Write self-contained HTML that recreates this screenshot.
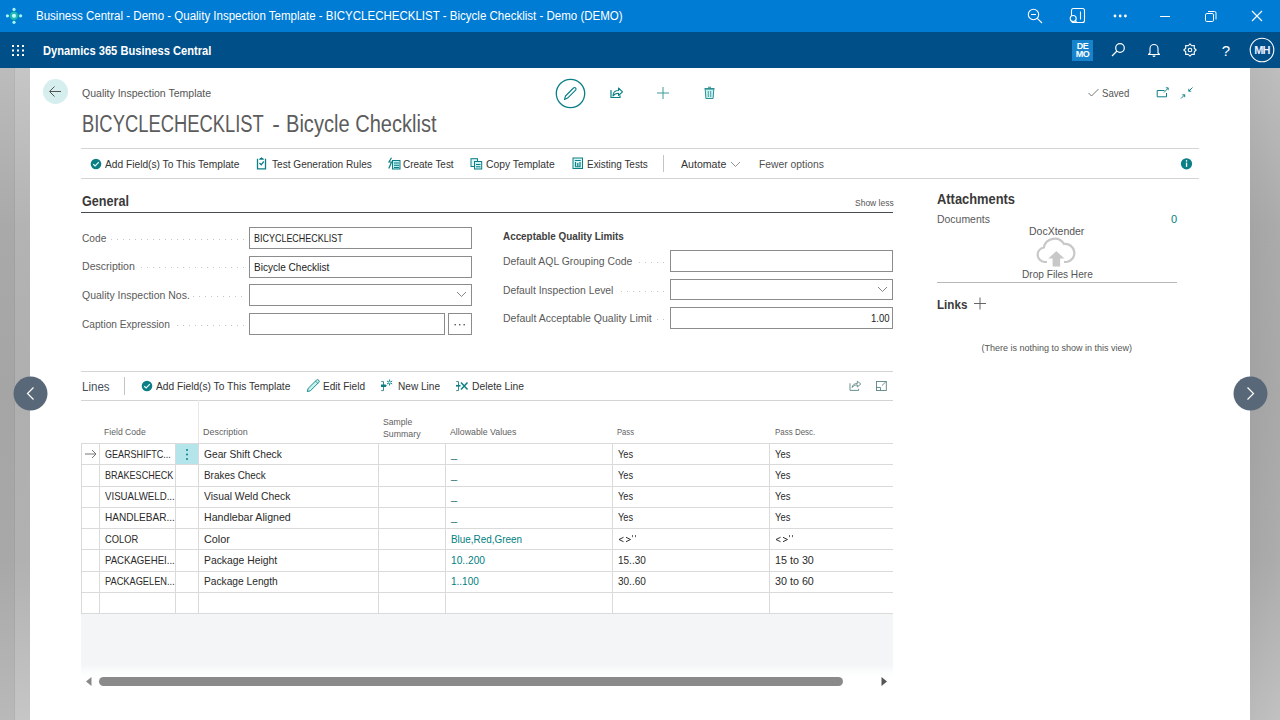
<!DOCTYPE html>
<html><head><meta charset="utf-8"><style>*{margin:0;padding:0;box-sizing:border-box}
html,body{width:1280px;height:720px;overflow:hidden;background:#fff;font-family:"Liberation Sans",sans-serif}
.t{position:absolute;white-space:nowrap;transform-origin:0 0}
.b{position:absolute}
svg.b{overflow:visible}</style></head><body>
<svg class="b" style="left:612px;top:530px" width="30" height="16"><path d="M11.5 7.3L7 9.5L11.5 11.7M14 7.3L18.5 9.5L14 11.7" fill="none" stroke="#333" stroke-width="1"/><path d="M20.5 5V7.2M23.5 5V7.2" stroke="#666" stroke-width="1"/></svg>
<svg class="b" style="left:769px;top:530px" width="30" height="16"><path d="M11.5 7.3L7 9.5L11.5 11.7M14 7.3L18.5 9.5L14 11.7" fill="none" stroke="#333" stroke-width="1"/><path d="M20.5 5V7.2M23.5 5V7.2" stroke="#666" stroke-width="1"/></svg>
<div class="b" style="left:0px;top:0px;width:1280px;height:32px;background:#007cd4;"></div>
<div class="b" style="left:0px;top:32px;width:1280px;height:36px;background:#004f89;"></div>
<div class="b" style="left:0px;top:68px;width:15px;height:652px;background:linear-gradient(180deg,#bcbcbc 0%,#a9a9a9 24.5%,#a5a5a5 49%,#a8a8a8 75.5%,#b9b9b9 100%);"></div>
<div class="b" style="left:15px;top:68px;width:15px;height:652px;background:linear-gradient(180deg,#c6c6c6 0%,#b3b3b3 24.5%,#afafaf 49%,#b1b1b1 75.5%,#c6c6c6 100%);"></div>
<div class="b" style="left:14px;top:68px;width:1px;height:652px;background:rgba(0,0,0,0.035);"></div>
<div class="b" style="left:1250px;top:68px;width:30px;height:652px;background:linear-gradient(90deg,rgba(0,0,0,0.025),rgba(255,255,255,0.035)),linear-gradient(180deg,#bcbcbc 0%,#a8a8a8 24.5%,#a6a6a6 49%,#aaaaaa 75.5%,#bfbfbf 100%);"></div>
<svg class="b" style="left:0px;top:0px;" width="32" height="32" viewBox="0 0 32 32"><path d="M14 10L20 15.8L14 21.8L8 15.8Z" fill="#0c8f96"/><circle cx="14" cy="15.8" r="4" fill="#1ab8b8"/><circle cx="14" cy="15.8" r="2" fill="#c8fbff"/><g fill="#a8f6ff"><circle cx="14" cy="9.4" r="1.6"/><circle cx="14" cy="22.3" r="1.6"/><circle cx="7.4" cy="15.8" r="1.6"/><circle cx="20.6" cy="15.8" r="1.6"/></g></svg>
<svg class="b" style="left:1026px;top:7px;" width="18" height="18" viewBox="0 0 18 18"><circle cx="7.5" cy="7.5" r="5.2" fill="none" stroke="#fff" stroke-width="1.1"/><path d="M5 7.5H10M11.3 11.3L16 16" stroke="#fff" stroke-width="1.1"/></svg>
<svg class="b" style="left:1068px;top:7px;" width="20" height="18" viewBox="0 0 20 18"><rect x="3.5" y="1.5" width="13" height="14" rx="2" fill="none" stroke="#fff" stroke-width="1.1"/><path d="M12.5 4.5V12.5" stroke="#fff" stroke-width="1.1"/><circle cx="5.2" cy="11.5" r="3" fill="#007cd4" stroke="#fff" stroke-width="1.1"/><path d="M7.3 13.6L9 15.6" stroke="#fff" stroke-width="1.1"/></svg>
<svg class="b" style="left:1112px;top:13px;" width="16" height="6" viewBox="0 0 16 6"><circle cx="3" cy="3" r="1.4" fill="#fff"/><circle cx="8.2" cy="3" r="1.4" fill="#fff"/><circle cx="13.4" cy="3" r="1.4" fill="#fff"/></svg>
<div class="b" style="left:1160px;top:16px;width:10px;height:1px;background:#fff;"></div>
<svg class="b" style="left:1204px;top:10px;" width="14" height="14" viewBox="0 0 14 14"><rect x="1.5" y="3.5" width="8" height="8" rx="1.3" fill="none" stroke="#fff" stroke-width="1"/><path d="M4 1.5H10.5A1.5 1.5 0 0 1 12 3V9.5" fill="none" stroke="#fff" stroke-width="1"/></svg>
<svg class="b" style="left:1251px;top:10px;" width="12" height="12" viewBox="0 0 12 12"><path d="M1 1L11 11M11 1L1 11" stroke="#fff" stroke-width="1.1"/></svg>
<svg class="b" style="left:11px;top:44px;" width="14" height="13" viewBox="0 0 14 13"><rect x="1" y="1.0" width="2" height="2" fill="#fff"/><rect x="1" y="5.5" width="2" height="2" fill="#fff"/><rect x="1" y="10.0" width="2" height="2" fill="#fff"/><rect x="6" y="1.0" width="2" height="2" fill="#fff"/><rect x="6" y="5.5" width="2" height="2" fill="#fff"/><rect x="6" y="10.0" width="2" height="2" fill="#fff"/><rect x="11" y="1.0" width="2" height="2" fill="#fff"/><rect x="11" y="5.5" width="2" height="2" fill="#fff"/><rect x="11" y="10.0" width="2" height="2" fill="#fff"/></svg>
<div class="b" style="left:1072px;top:40px;width:21px;height:21px;background:#1683cc;"></div>
<div class="t" style="left:1072px;top:41.5px;width:21px;text-align:center;font-size:9px;line-height:8.5px;font-weight:bold;color:#fff;letter-spacing:-0.4px">DE<br>MO</div>
<svg class="b" style="left:1110px;top:42px;" width="16" height="16" viewBox="0 0 16 16"><circle cx="10" cy="6" r="4.3" fill="none" stroke="#fff" stroke-width="1.2"/><path d="M7 9L2 14" stroke="#fff" stroke-width="1.2"/></svg>
<svg class="b" style="left:1147px;top:42px;" width="14" height="15" viewBox="0 0 14 15"><path d="M3 11V6.5A4 4 0 0 1 11 6.5V11L12.5 12.5H1.5Z" fill="none" stroke="#fff" stroke-width="1.1" stroke-linejoin="round"/><path d="M5.5 13.5A1.5 1.5 0 0 0 8.5 13.5" fill="#fff"/></svg>
<svg class="b" style="left:1183px;top:43px;" width="14" height="14" viewBox="0 0 14 14"><path d="M13.20 7.00 L11.25 8.76 L11.38 11.38 L8.76 11.25 L7.00 13.20 L5.24 11.25 L2.62 11.38 L2.75 8.76 L0.80 7.00 L2.75 5.24 L2.62 2.62 L5.24 2.75 L7.00 0.80 L8.76 2.75 L11.38 2.62 L11.25 5.24Z" fill="none" stroke="#fff" stroke-width="1.1" stroke-linejoin="round"/><circle cx="7" cy="7" r="1.8" fill="none" stroke="#fff" stroke-width="1.1"/></svg>
<div class="t" style="left:1219px;top:43px;width:14px;text-align:center;font-size:15px;line-height:15px;color:#fff">?</div>
<svg class="b" style="left:1249px;top:37px;" width="26" height="26" viewBox="0 0 26 26"><circle cx="13" cy="13" r="11.8" fill="none" stroke="#fff" stroke-width="1.1"/></svg>
<div class="t" style="left:1249px;top:45px;width:26px;text-align:center;font-size:11px;line-height:11px;font-weight:bold;color:#eef;letter-spacing:-0.8px">MH</div>
<svg class="b" style="left:42px;top:78px;" width="27" height="27" viewBox="0 0 27 27"><circle cx="13.5" cy="13.5" r="12.5" fill="#d6eeee"/><path d="M8 13.5H19M12.5 8.5L7.5 13.5L12.5 18.5" fill="none" stroke="#555" stroke-width="1"/></svg>
<svg class="b" style="left:555px;top:78px;" width="31" height="31" viewBox="0 0 31 31"><circle cx="15.5" cy="15.5" r="14.2" fill="none" stroke="#0b7f85" stroke-width="1.3"/><path d="M9.5 21.5L10.5 18L18.5 10A1.4 1.4 0 0 1 20.6 12.1L12.6 20.1Z" fill="none" stroke="#0b7f85" stroke-width="1.1" stroke-linejoin="round"/></svg>
<svg class="b" style="left:609px;top:86px;" width="15" height="14" viewBox="0 0 15 14"><path d="M2 4V11.5H11V9.5" fill="none" stroke="#0b7f85" stroke-width="1.2"/><path d="M4 10C4 6 6.5 4.5 9.5 4.5V2L13.5 5.8L9.5 9.5V7.2C7 7.2 5.2 8 4 10Z" fill="none" stroke="#0b7f85" stroke-width="1.1" stroke-linejoin="round"/></svg>
<svg class="b" style="left:656px;top:86px;" width="14" height="14" viewBox="0 0 14 14"><path d="M7 1V13M1 7H13" stroke="#3c9a9c" stroke-width="1"/></svg>
<svg class="b" style="left:703px;top:86px;" width="13" height="14" viewBox="0 0 13 14"><path d="M2.2 3H10.8L10.1 12.5H2.9Z" fill="#c8f2f2" stroke="#2f8f93" stroke-width="1" stroke-linejoin="round"/><path d="M1.5 2.6H11.5M5 1.3H8" stroke="#2f8f93" stroke-width="1.1"/><path d="M5.3 5V11M7.7 5V11" stroke="#4a9fa2" stroke-width="1"/></svg>
<svg class="b" style="left:1087px;top:87px;" width="13" height="11" viewBox="0 0 13 11"><path d="M1.5 6L4.5 9L11.5 2" fill="none" stroke="#666" stroke-width="0.9"/></svg>
<svg class="b" style="left:1155px;top:86px;" width="15" height="13" viewBox="0 0 15 13"><path d="M9.5 4.5H2.2V10.8H11.5V7" fill="none" stroke="#0b7f85" stroke-width="1"/><path d="M9 6.5L13 2.2M10.8 1.8H13.2V4.2" fill="none" stroke="#0b7f85" stroke-width="0.9"/></svg>
<svg class="b" style="left:1179px;top:86px;" width="16" height="14" viewBox="0 0 16 14"><path d="M13.5 1.5L9.8 5.2M9.8 2.8V5.2H12.2M2 12.5L5.7 8.8M3.3 8.8H5.7V11.2" fill="none" stroke="#0b7f85" stroke-width="0.95"/></svg>
<div class="b" style="left:81px;top:148px;width:1118px;height:1px;background:#d4d4d4;"></div>
<div class="b" style="left:81px;top:178px;width:1118px;height:1px;background:#d4d4d4;"></div>
<div class="b" style="left:663px;top:155px;width:1px;height:17px;background:#c4c4c4;"></div>
<svg class="b" style="left:90px;top:158px;" width="12" height="12" viewBox="0 0 12 12"><circle cx="6" cy="6" r="5.3" fill="#0b7f85"/><path d="M3.2 6.2L5.2 8L8.8 4.2" fill="none" stroke="#e8ffff" stroke-width="1.2"/></svg>
<svg class="b" style="left:256px;top:157px;" width="11" height="13" viewBox="0 0 11 13"><path d="M1.5 1.8V11.8H9.5V1.8" fill="none" stroke="#0b7f85" stroke-width="1.3"/><path d="M3.5 2.2L5.5 0.8L7.5 2.2Z" fill="#0b7f85" stroke="#0b7f85" stroke-width="1"/><path d="M3.5 6L5.2 7.8L7.8 4.5" fill="none" stroke="#0b7f85" stroke-width="1.3"/></svg>
<svg class="b" style="left:388px;top:157px;" width="13" height="13" viewBox="0 0 13 13"><rect x="4.5" y="3.5" width="7.5" height="8.5" fill="#bfeeee" stroke="#0b7f85" stroke-width="1"/><path d="M6 6H11M6 8.3H11M6 10.5H11" stroke="#0b7f85" stroke-width="1"/><path d="M3.5 0.8L1 5H3.5L0.8 11.5" fill="none" stroke="#0b7f85" stroke-width="1.2"/></svg>
<svg class="b" style="left:470px;top:158px;" width="13" height="12" viewBox="0 0 13 12"><rect x="1" y="0.7" width="6.5" height="7.8" fill="#e0f7f7" stroke="#0b7f85" stroke-width="1"/><rect x="4.5" y="3.5" width="7.2" height="7.5" fill="#d0f2f2" stroke="#0b7f85" stroke-width="1"/><path d="M6 6.5H10.5M6 8.8H10.5" stroke="#0b7f85" stroke-width="1"/></svg>
<svg class="b" style="left:572px;top:157px;" width="12" height="13" viewBox="0 0 12 13"><rect x="1" y="1" width="9.5" height="10.5" fill="#d8f6f6" stroke="#0b7f85" stroke-width="1"/><path d="M2.8 3.5H8.8M3 9.8H8.6" stroke="#0b7f85" stroke-width="1.1"/><path d="M3.5 5V9.5M5.8 6V9.5M8 5V9.5" stroke="#0b7f85" stroke-width="1.2"/></svg>
<svg class="b" style="left:730px;top:161px;" width="11" height="7" viewBox="0 0 11 7"><path d="M1 1L5.5 5.5L10 1" fill="none" stroke="#888" stroke-width="0.9"/></svg>
<svg class="b" style="left:1180px;top:157px;" width="13" height="13" viewBox="0 0 13 13"><circle cx="6.5" cy="6.8" r="5.6" fill="#0b7f85"/><rect x="5.9" y="5.6" width="1.3" height="4.2" fill="#fff"/><circle cx="6.55" cy="3.9" r="0.8" fill="#fff"/></svg>
<div class="b" style="left:81px;top:212px;width:812px;height:1px;background:#474b52;"></div>
<div class="b" style="left:111px;top:239px;width:134px;height:1px;background:repeating-linear-gradient(90deg,#c6c6c6 0 1px,transparent 1px 6px)"></div>
<div class="b" style="left:141px;top:267px;width:104px;height:1px;background:repeating-linear-gradient(90deg,#c6c6c6 0 1px,transparent 1px 6px)"></div>
<div class="b" style="left:193px;top:296px;width:52px;height:1px;background:repeating-linear-gradient(90deg,#c6c6c6 0 1px,transparent 1px 6px)"></div>
<div class="b" style="left:177px;top:325px;width:68px;height:1px;background:repeating-linear-gradient(90deg,#c6c6c6 0 1px,transparent 1px 6px)"></div>
<div class="b" style="left:639px;top:262px;width:28px;height:1px;background:repeating-linear-gradient(90deg,#c6c6c6 0 1px,transparent 1px 6px)"></div>
<div class="b" style="left:621px;top:291px;width:46px;height:1px;background:repeating-linear-gradient(90deg,#c6c6c6 0 1px,transparent 1px 6px)"></div>
<div class="b" style="left:657px;top:319px;width:10px;height:1px;background:repeating-linear-gradient(90deg,#c6c6c6 0 1px,transparent 1px 6px)"></div>
<div class="b" style="left:249px;top:227px;width:223px;height:22px;border:1px solid #8c8c8c;background:#fff"></div>
<div class="b" style="left:249px;top:256px;width:223px;height:22px;border:1px solid #8c8c8c;background:#fff"></div>
<div class="b" style="left:249px;top:284px;width:223px;height:22px;border:1px solid #8c8c8c;background:#fff"></div>
<div class="b" style="left:249px;top:313px;width:196px;height:22px;border:1px solid #8c8c8c;background:#fff"></div>
<div class="b" style="left:448px;top:313px;width:24px;height:22px;border:1px solid #8c8c8c;background:#fff"></div>
<div class="b" style="left:670px;top:250px;width:223px;height:22px;border:1px solid #8c8c8c;background:#fff"></div>
<div class="b" style="left:670px;top:279px;width:223px;height:21px;border:1px solid #8c8c8c;background:#fff"></div>
<div class="b" style="left:670px;top:307px;width:223px;height:22px;border:1px solid #8c8c8c;background:#fff"></div>
<svg class="b" style="left:456px;top:291px;" width="11" height="7" viewBox="0 0 11 7"><path d="M1 1L5.5 5.5L10 1" fill="none" stroke="#777" stroke-width="0.9"/></svg>
<svg class="b" style="left:877px;top:286px;" width="11" height="7" viewBox="0 0 11 7"><path d="M1 1L5.5 5.5L10 1" fill="none" stroke="#777" stroke-width="0.9"/></svg>
<svg class="b" style="left:453px;top:323px;" width="14" height="4" viewBox="0 0 14 4"><rect x="1.5" y="1" width="1.4" height="1.4" fill="#555"/><rect x="6" y="1" width="1.4" height="1.4" fill="#555"/><rect x="10.5" y="1" width="1.4" height="1.4" fill="#555"/></svg>
<svg class="b" style="left:1035px;top:235px;" width="42" height="33" viewBox="0 0 42 33"><path d="M12 27H9.5A7.3 7.3 0 0 1 8.8 12.5A11 11 0 0 1 29 9A8.5 8.5 0 0 1 31.5 27H29" fill="none" stroke="#c8c8c8" stroke-width="2.2"/><path d="M21.3 16L13.3 23.5H17.6V31.5H25.1V23.5H29.3Z" fill="#c8c8c8"/></svg>
<div class="b" style="left:937px;top:282px;width:240px;height:1px;background:#b8b8b8;"></div>
<svg class="b" style="left:973px;top:297px;" width="14" height="14" viewBox="0 0 14 14"><path d="M7 0.5V12.5M1 6.5H13" stroke="#555" stroke-width="0.9"/></svg>
<div class="b" style="left:81px;top:371px;width:812px;height:1px;background:#d4d4d4;"></div>
<div class="b" style="left:81px;top:400px;width:812px;height:1px;background:#d4d4d4;"></div>
<div class="b" style="left:124px;top:377px;width:1px;height:18px;background:#c4c4c4;"></div>
<svg class="b" style="left:141px;top:380px;" width="12" height="12" viewBox="0 0 12 12"><circle cx="6" cy="6" r="5.3" fill="#0b7f85"/><path d="M3.2 6.2L5.2 8L8.8 4.2" fill="none" stroke="#e8ffff" stroke-width="1.2"/></svg>
<svg class="b" style="left:300px;top:376px;" width="24" height="20" viewBox="0 0 24 20"><path d="M7.3 15.6L8.1 12.4L16.4 4.2A1.6 1.6 0 0 1 18.7 6.5L10.4 14.8Z" fill="#c6f2ec" stroke="#0b7f85" stroke-width="0.9" stroke-linejoin="round"/><path d="M15.5 5.1L17.8 7.4" stroke="#0b7f85" stroke-width="0.8"/></svg>
<svg class="b" style="left:376px;top:376px;" width="24" height="20" viewBox="0 0 24 20"><path d="M5.2 5.6H7.5V14.6H5.2" fill="none" stroke="#3f8a8a" stroke-width="1"/><path d="M5 8.6H9.6L10.8 9.85L9.6 11.1H5Z" fill="#0b7f85"/><path d="M13.6 3.5V9.5M11 5L16.2 8M11 8L16.2 5" stroke="#0b7f85" stroke-width="1"/><circle cx="13.6" cy="6.5" r="1" fill="#bff"/></svg>
<svg class="b" style="left:451px;top:376px;" width="24" height="20" viewBox="0 0 24 20"><path d="M5.2 5.6H7.5V14.6H5.2" fill="none" stroke="#3f8a8a" stroke-width="1"/><path d="M5 8.9H9.5V10.6H5Z" fill="#0b7f85"/><path d="M10 6.6L16.5 13.4M16.5 6.6L10 13.4" stroke="#0b7f85" stroke-width="1.5"/></svg>
<svg class="b" style="left:844px;top:376px;" width="50" height="20" viewBox="0 0 50 20"><path d="M6 7.3V14.4H14.6V12.8" fill="none" stroke="#5b8585" stroke-width="0.9"/><path d="M8.2 11.5C8.5 8.5 10.5 7.5 13.3 7.5V5.2L16.8 8L13.3 11V8.9C11 8.9 9.3 9.8 8.2 11.5Z" fill="none" stroke="#5b8585" stroke-width="0.9" stroke-linejoin="round"/><rect x="32.5" y="5.5" width="9.8" height="9" fill="none" stroke="#5b8585" stroke-width="0.9"/><path d="M32.5 11.5H36.5V14.5" fill="none" stroke="#5b8585" stroke-width="0.9"/><path d="M38 9.5L41.8 5.8" stroke="#5b8585" stroke-width="0.9"/></svg>
<div class="b" style="left:81px;top:613px;width:812px;height:64px;background:linear-gradient(180deg,#f4f5f6 0%,#f4f5f6 80%,#fbfcfc 92%,#fff 100%);"></div>
<div class="b" style="left:198px;top:400px;width:1px;height:43px;background:#e8e8e8;"></div>
<div class="b" style="left:198px;top:443px;width:1px;height:171px;background:#dadada;"></div>
<div class="b" style="left:81px;top:443px;width:812px;height:1px;background:#dadada;"></div>
<div class="b" style="left:81px;top:464px;width:812px;height:1px;background:#dadada;"></div>
<div class="b" style="left:81px;top:486px;width:812px;height:1px;background:#dadada;"></div>
<div class="b" style="left:81px;top:507px;width:812px;height:1px;background:#dadada;"></div>
<div class="b" style="left:81px;top:528px;width:812px;height:1px;background:#dadada;"></div>
<div class="b" style="left:81px;top:549px;width:812px;height:1px;background:#dadada;"></div>
<div class="b" style="left:81px;top:571px;width:812px;height:1px;background:#dadada;"></div>
<div class="b" style="left:81px;top:592px;width:812px;height:1px;background:#dadada;"></div>
<div class="b" style="left:81px;top:613px;width:812px;height:1px;background:#dadada;"></div>
<div class="b" style="left:81px;top:443px;width:1px;height:171px;background:#dadada;"></div>
<div class="b" style="left:99px;top:443px;width:1px;height:171px;background:#dadada;"></div>
<div class="b" style="left:175px;top:443px;width:1px;height:171px;background:#dadada;"></div>
<div class="b" style="left:378px;top:443px;width:1px;height:171px;background:#dadada;"></div>
<div class="b" style="left:445px;top:443px;width:1px;height:171px;background:#dadada;"></div>
<div class="b" style="left:612px;top:443px;width:1px;height:171px;background:#dadada;"></div>
<div class="b" style="left:769px;top:443px;width:1px;height:171px;background:#dadada;"></div>
<div class="b" style="left:176px;top:444px;width:22px;height:20px;background:#b3e5ea;"></div>
<svg class="b" style="left:84px;top:449px;" width="14" height="10" viewBox="0 0 14 10"><path d="M1 5H12M8 1L12 5L8 9" fill="none" stroke="#666" stroke-width="0.9"/></svg>
<svg class="b" style="left:185px;top:448px;" width="4" height="14" viewBox="0 0 4 14"><circle cx="2" cy="2" r="1" fill="#0b7f85"/><circle cx="2" cy="6.5" r="1" fill="#0b7f85"/><circle cx="2" cy="11" r="1" fill="#0b7f85"/></svg>
<div class="b" style="left:99px;top:677px;width:744px;height:9px;background:#8a8a8a;border-radius:4.5px;"></div>
<svg class="b" style="left:85px;top:677px;" width="8" height="9" viewBox="0 0 8 9"><path d="M6.5 0L1 4.5L6.5 9Z" fill="#888"/></svg>
<svg class="b" style="left:880px;top:677px;" width="8" height="9" viewBox="0 0 8 9"><path d="M1.5 0L7 4.5L1.5 9Z" fill="#555"/></svg>
<svg class="b" style="left:13px;top:376px;" width="35" height="35" viewBox="0 0 35 35"><circle cx="17.5" cy="17.5" r="17" fill="#596878"/><path d="M20.5 11.5L14.5 17.5L20.5 23.5" fill="none" stroke="#fff" stroke-width="1.2"/></svg>
<svg class="b" style="left:1233px;top:376px;" width="35" height="35" viewBox="0 0 35 35"><circle cx="17.5" cy="17.5" r="17" fill="#596878"/><path d="M14.5 11.5L20.5 17.5L14.5 23.5" fill="none" stroke="#fff" stroke-width="1.2"/></svg>
<div class="t" style="left:36.0px;top:10px;font-size:12px;line-height:12px;color:#fff;transform:scaleX(0.960);">Business Central - Demo - Quality Inspection Template - BICYCLECHECKLIST - Bicycle Checklist - Demo (DEMO)</div>
<div class="t" style="left:42.5px;top:45px;font-size:12px;line-height:12px;color:#fff;font-weight:bold;transform:scaleX(0.928);">Dynamics 365 Business Central</div>
<div class="t" style="left:81.5px;top:88px;font-size:11px;line-height:11px;color:#555;transform:scaleX(0.957);">Quality Inspection Template</div>
<div class="t" style="left:82.3px;top:113px;font-size:23px;line-height:23px;color:#5c5c5c;transform:scaleX(0.799);">BICYCLECHECKLIST</div>
<div class="t" style="left:272.3px;top:113px;font-size:23px;line-height:23px;color:#5c5c5c;">-</div>
<div class="t" style="left:286.4px;top:113px;font-size:23px;line-height:23px;color:#5c5c5c;transform:scaleX(0.873);">Bicycle Checklist</div>
<div class="t" style="left:1101.5px;top:88px;font-size:11px;line-height:11px;color:#555;transform:scaleX(0.874);">Saved</div>
<div class="t" style="left:104.5px;top:159px;font-size:11px;line-height:11px;color:#333;transform:scaleX(0.927);">Add Field(s) To This Template</div>
<div class="t" style="left:271.5px;top:159px;font-size:11px;line-height:11px;color:#333;transform:scaleX(0.917);">Test Generation Rules</div>
<div class="t" style="left:402.5px;top:159px;font-size:11px;line-height:11px;color:#333;transform:scaleX(0.903);">Create Test</div>
<div class="t" style="left:486.0px;top:159px;font-size:11px;line-height:11px;color:#333;transform:scaleX(0.938);">Copy Template</div>
<div class="t" style="left:586.5px;top:159px;font-size:11px;line-height:11px;color:#333;transform:scaleX(0.904);">Existing Tests</div>
<div class="t" style="left:681.0px;top:159px;font-size:11px;line-height:11px;color:#333;transform:scaleX(0.963);">Automate</div>
<div class="t" style="left:758.5px;top:159px;font-size:11px;line-height:11px;color:#505050;transform:scaleX(0.938);">Fewer options</div>
<div class="t" style="left:81.5px;top:194px;font-size:14px;line-height:14px;color:#3a3a3a;font-weight:bold;transform:scaleX(0.902);">General</div>
<div class="t" style="left:854.5px;top:199px;font-size:9px;line-height:9px;color:#555;transform:scaleX(0.943);">Show less</div>
<div class="t" style="left:81.5px;top:233px;font-size:11px;line-height:11px;color:#5a5a5a;transform:scaleX(0.925);">Code</div>
<div class="t" style="left:81.5px;top:261px;font-size:11px;line-height:11px;color:#5a5a5a;transform:scaleX(0.960);">Description</div>
<div class="t" style="left:81.5px;top:290px;font-size:11px;line-height:11px;color:#5a5a5a;transform:scaleX(0.953);">Quality Inspection Nos.</div>
<div class="t" style="left:81.5px;top:319px;font-size:11px;line-height:11px;color:#5a5a5a;transform:scaleX(0.921);">Caption Expression</div>
<div class="t" style="left:253.5px;top:233px;font-size:11px;line-height:11px;color:#222;transform:scaleX(0.815);">BICYCLECHECKLIST</div>
<div class="t" style="left:253.5px;top:262px;font-size:11px;line-height:11px;color:#222;transform:scaleX(0.913);">Bicycle Checklist</div>
<div class="t" style="left:502.5px;top:231px;font-size:11px;line-height:11px;color:#404040;font-weight:bold;transform:scaleX(0.898);">Acceptable Quality Limits</div>
<div class="t" style="left:502.5px;top:256px;font-size:11px;line-height:11px;color:#5a5a5a;transform:scaleX(0.947);">Default AQL Grouping Code</div>
<div class="t" style="left:502.5px;top:285px;font-size:11px;line-height:11px;color:#5a5a5a;transform:scaleX(0.940);">Default Inspection Level</div>
<div class="t" style="left:502.5px;top:313px;font-size:11px;line-height:11px;color:#5a5a5a;transform:scaleX(0.958);">Default Acceptable Quality Limit</div>
<div class="t" style="left:870.8px;top:313px;font-size:11px;line-height:11px;color:#222;transform:scaleX(0.867);">1.00</div>
<div class="t" style="left:937.0px;top:192px;font-size:14px;line-height:14px;color:#3a3a3a;font-weight:bold;transform:scaleX(0.920);">Attachments</div>
<div class="t" style="left:937.0px;top:214px;font-size:11px;line-height:11px;color:#5a5a5a;transform:scaleX(0.950);">Documents</div>
<div class="t" style="left:1171.0px;top:214px;font-size:11px;line-height:11px;color:#00807f;">0</div>
<div class="t" style="left:1029.3px;top:226px;font-size:11px;line-height:11px;color:#555;transform:scaleX(0.953);">DocXtender</div>
<div class="t" style="left:1022.0px;top:269px;font-size:11px;line-height:11px;color:#555;transform:scaleX(0.919);">Drop Files Here</div>
<div class="t" style="left:937.0px;top:298px;font-size:13px;line-height:13px;color:#3a3a3a;font-weight:bold;transform:scaleX(0.896);">Links</div>
<div class="t" style="left:981.5px;top:344px;font-size:9px;line-height:9px;color:#555;">(There is nothing to show in this view)</div>
<div class="t" style="left:81.7px;top:381px;font-size:12px;line-height:12px;color:#474f5c;transform:scaleX(0.963);">Lines</div>
<div class="t" style="left:156.0px;top:381px;font-size:11px;line-height:11px;color:#333;transform:scaleX(0.927);">Add Field(s) To This Template</div>
<div class="t" style="left:322.5px;top:381px;font-size:11px;line-height:11px;color:#333;transform:scaleX(0.918);">Edit Field</div>
<div class="t" style="left:397.6px;top:381px;font-size:11px;line-height:11px;color:#333;transform:scaleX(0.916);">New Line</div>
<div class="t" style="left:471.7px;top:381px;font-size:11px;line-height:11px;color:#333;transform:scaleX(0.935);">Delete Line</div>
<div class="t" style="left:104.0px;top:428px;font-size:9px;line-height:9px;color:#5f5f5f;transform:scaleX(0.958);">Field Code</div>
<div class="t" style="left:203.0px;top:428px;font-size:9px;line-height:9px;color:#5f5f5f;transform:scaleX(0.993);">Description</div>
<div class="t" style="left:383.0px;top:417px;font-size:9.5px;line-height:9.5px;color:#5f5f5f;transform:scaleX(0.909);">Sample</div>
<div class="t" style="left:383.0px;top:429px;font-size:9.5px;line-height:9.5px;color:#5f5f5f;transform:scaleX(0.923);">Summary</div>
<div class="t" style="left:450.4px;top:428px;font-size:9px;line-height:9px;color:#5f5f5f;transform:scaleX(0.977);">Allowable Values</div>
<div class="t" style="left:617.0px;top:428px;font-size:9px;line-height:9px;color:#5f5f5f;transform:scaleX(0.850);">Pass</div>
<div class="t" style="left:774.6px;top:428px;font-size:9px;line-height:9px;color:#5f5f5f;transform:scaleX(0.884);">Pass Desc.</div>
<div class="t" style="left:104.5px;top:449px;font-size:11px;line-height:11px;color:#2a2a2a;transform:scaleX(0.821);">GEARSHIFTC...</div>
<div class="t" style="left:203.5px;top:449px;font-size:11px;line-height:11px;color:#2a2a2a;transform:scaleX(0.929);">Gear Shift Check</div>
<div class="t" style="left:451.0px;top:449px;font-size:11px;line-height:11px;color:#1a6a6a;">_</div>
<div class="t" style="left:618.0px;top:449px;font-size:11px;line-height:11px;color:#2a2a2a;transform:scaleX(0.844);">Yes</div>
<div class="t" style="left:775.0px;top:449px;font-size:11px;line-height:11px;color:#2a2a2a;transform:scaleX(0.856);">Yes</div>
<div class="t" style="left:104.5px;top:470px;font-size:11px;line-height:11px;color:#2a2a2a;transform:scaleX(0.821);">BRAKESCHECK</div>
<div class="t" style="left:203.5px;top:470px;font-size:11px;line-height:11px;color:#2a2a2a;transform:scaleX(0.902);">Brakes Check</div>
<div class="t" style="left:451.0px;top:470px;font-size:11px;line-height:11px;color:#1a6a6a;">_</div>
<div class="t" style="left:618.0px;top:470px;font-size:11px;line-height:11px;color:#2a2a2a;transform:scaleX(0.844);">Yes</div>
<div class="t" style="left:775.0px;top:470px;font-size:11px;line-height:11px;color:#2a2a2a;transform:scaleX(0.856);">Yes</div>
<div class="t" style="left:104.5px;top:491px;font-size:11px;line-height:11px;color:#2a2a2a;transform:scaleX(0.880);">VISUALWELD...</div>
<div class="t" style="left:203.5px;top:491px;font-size:11px;line-height:11px;color:#2a2a2a;transform:scaleX(0.939);">Visual Weld Check</div>
<div class="t" style="left:451.0px;top:491px;font-size:11px;line-height:11px;color:#1a6a6a;">_</div>
<div class="t" style="left:618.0px;top:491px;font-size:11px;line-height:11px;color:#2a2a2a;transform:scaleX(0.844);">Yes</div>
<div class="t" style="left:775.0px;top:491px;font-size:11px;line-height:11px;color:#2a2a2a;transform:scaleX(0.856);">Yes</div>
<div class="t" style="left:104.5px;top:512px;font-size:11px;line-height:11px;color:#2a2a2a;transform:scaleX(0.914);">HANDLEBAR...</div>
<div class="t" style="left:203.5px;top:512px;font-size:11px;line-height:11px;color:#2a2a2a;transform:scaleX(0.965);">Handlebar Aligned</div>
<div class="t" style="left:451.0px;top:512px;font-size:11px;line-height:11px;color:#1a6a6a;">_</div>
<div class="t" style="left:618.0px;top:512px;font-size:11px;line-height:11px;color:#2a2a2a;transform:scaleX(0.844);">Yes</div>
<div class="t" style="left:775.0px;top:512px;font-size:11px;line-height:11px;color:#2a2a2a;transform:scaleX(0.856);">Yes</div>
<div class="t" style="left:104.5px;top:534px;font-size:11px;line-height:11px;color:#2a2a2a;transform:scaleX(0.850);">COLOR</div>
<div class="t" style="left:203.5px;top:534px;font-size:11px;line-height:11px;color:#2a2a2a;transform:scaleX(0.984);">Color</div>
<div class="t" style="left:451.0px;top:534px;font-size:11px;line-height:11px;color:#00807f;transform:scaleX(0.900);">Blue,Red,Green</div>
<div class="t" style="left:104.5px;top:555px;font-size:11px;line-height:11px;color:#2a2a2a;transform:scaleX(0.873);">PACKAGEHEI...</div>
<div class="t" style="left:203.5px;top:555px;font-size:11px;line-height:11px;color:#2a2a2a;transform:scaleX(0.942);">Package Height</div>
<div class="t" style="left:451.0px;top:555px;font-size:11px;line-height:11px;color:#00807f;transform:scaleX(0.927);">10..200</div>
<div class="t" style="left:618.0px;top:555px;font-size:11px;line-height:11px;color:#2a2a2a;transform:scaleX(0.909);">15..30</div>
<div class="t" style="left:775.0px;top:555px;font-size:11px;line-height:11px;color:#2a2a2a;transform:scaleX(0.977);">15 to 30</div>
<div class="t" style="left:104.5px;top:576px;font-size:11px;line-height:11px;color:#2a2a2a;transform:scaleX(0.841);">PACKAGELEN...</div>
<div class="t" style="left:203.5px;top:576px;font-size:11px;line-height:11px;color:#2a2a2a;transform:scaleX(0.928);">Package Length</div>
<div class="t" style="left:451.0px;top:576px;font-size:11px;line-height:11px;color:#00807f;transform:scaleX(0.909);">1..100</div>
<div class="t" style="left:618.0px;top:576px;font-size:11px;line-height:11px;color:#2a2a2a;transform:scaleX(0.909);">30..60</div>
<div class="t" style="left:775.0px;top:576px;font-size:11px;line-height:11px;color:#2a2a2a;transform:scaleX(0.977);">30 to 60</div>
</body></html>
